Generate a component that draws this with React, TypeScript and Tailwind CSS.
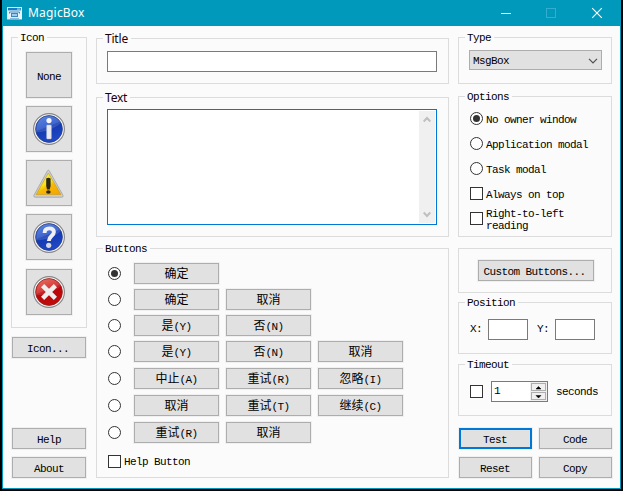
import type { ReactNode } from "react";

const mono =
  "font-['Liberation_Mono','Noto_Sans_CJK_SC',monospace] text-[11px] tracking-[-0.6px] leading-[12px] text-black";
const humanist = "font-['Noto_Sans','Open_Sans',sans-serif]";

function Group({
  label,
  className = "",
  sans = false,
  children,
}: {
  label?: string;
  className?: string;
  sans?: boolean;
  children?: ReactNode;
}) {
  return (
    <section className={`relative shrink-0 border border-[#dcdcdc] ${className}`}>
      {label && (
        <span
          className={`absolute left-[6px] bg-[#fbfbfb] pr-[3px] whitespace-pre ${
            sans
              ? `${humanist} -top-[7px] pl-[2px] text-[12px] leading-[13px] tracking-[-0.2px] text-[#1a0010]`
              : "-top-[6px] pl-[2px]"
          }`}
        >
          {label}
        </span>
      )}
      {children}
    </section>
  );
}

function Btn({
  className = "",
  focused = false,
  children,
}: {
  className?: string;
  focused?: boolean;
  children: ReactNode;
}) {
  return (
    <button
      className={`flex h-[21px] shrink-0 items-center justify-center bg-[#e1e1e1] whitespace-nowrap shadow-[0_0_0_1px_#f0f0f0] ${
        focused ? "border-2 border-[#0078d7]" : "border border-[#adadad]"
      } ${className}`}
    >
      {children}
    </button>
  );
}

function Radio({ checked = false }: { checked?: boolean }) {
  return (
    <span className="flex size-[13px] shrink-0 items-center justify-center rounded-full border border-[#333] bg-white">
      {checked && <span className="size-[7px] rounded-full bg-[#333]" />}
    </span>
  );
}

function Check() {
  return <span className="size-[13px] shrink-0 border border-[#333] bg-white" />;
}

function Field({ className = "" }: { className?: string }) {
  return <div className={`h-[21px] border border-[#7a7a7a] bg-white ${className}`} />;
}

function Orb({ red = false, children }: { red?: boolean; children: ReactNode }) {
  const id = red ? "orb-red" : "orb-blue";
  return (
    <svg width="32" height="32" viewBox="0 0 32 32">
      <defs>
        <linearGradient id={id} x1="0" y1="0" x2="0.4" y2="1">
          <stop offset="0" stopColor={red ? "#e8604e" : "#4a78e0"} />
          <stop offset="0.5" stopColor={red ? "#cf1f1c" : "#2350c8"} />
          <stop offset="0.52" stopColor={red ? "#b80508" : "#1239b0"} />
          <stop offset="1" stopColor={red ? "#c00b0b" : "#1f46c4"} />
        </linearGradient>
      </defs>
      <circle cx="16" cy="16" r="15.4" fill="#f4f4f4" stroke="#858585" strokeWidth="1.1" />
      <circle cx="16" cy="16" r="13.4" fill={`url(#${id})`} stroke={red ? "#8f2020" : "#2b3f80"} strokeWidth="0.8" />
      <path
        d="M3.2 19C8 20 20 17 28 10C25 5 20 3 16 3C8 3 3 9 3.2 19Z"
        fill="#ffffff"
        opacity="0.13"
      />
      {children}
    </svg>
  );
}

const InfoIcon = () => (
  <Orb>
    <circle cx="16" cy="7.6" r="2.6" fill="#f6f6fa" />
    <rect x="13.6" y="12" width="4.8" height="14" rx="0.8" fill="#e9eaf0" stroke="#aab2d0" strokeWidth="0.4" />
  </Orb>
);

const QuestionIcon = () => (
  <Orb>
    <path
      d="M11.6 12C11.6 8.4 13.6 7.4 16.3 7.4C19.1 7.4 20.9 8.7 20.9 11.1C20.9 14.8 16 14.8 15.8 20"
      fill="none"
      stroke="#eeeff5"
      strokeWidth="3.9"
    />
    <circle cx="15.7" cy="24.3" r="2.6" fill="#d5d8e2" />
  </Orb>
);

const ErrorIcon = () => (
  <Orb red>
    <path d="M9.6 9.6L22.4 22.4M22.4 9.6L9.6 22.4" stroke="#eeeeee" strokeWidth="4.5" fill="none" />
  </Orb>
);

const WarningIcon = () => (
  <svg width="32" height="32" viewBox="0 0 32 32">
    <defs>
      <linearGradient id="warn" x1="0.2" y1="0" x2="0.8" y2="1">
        <stop offset="0" stopColor="#f2ee6a" />
        <stop offset="0.45" stopColor="#fce313" />
        <stop offset="0.6" stopColor="#f7b908" />
        <stop offset="1" stopColor="#f5a500" />
      </linearGradient>
    </defs>
    <path
      d="M14.6 3.6L0.8 28.5Q0.5 30.2 2.2 30.2H28.6Q30.8 30.2 30 28.4L16.2 3.6Q15.4 2.7 14.6 3.6Z"
      fill="#cfcfcf"
      stroke="#a0a0a0"
      strokeWidth="0.8"
    />
    <path d="M15.3 6L3.1 27.6H28Z" fill="url(#warn)" stroke="#c5980c" strokeWidth="0.6" />
    <path d="M13.2 11.6Q15.4 10 17.6 11.6V19L16.7 22.6H14.1L13.2 19Z" fill="#29271c" />
    <ellipse cx="15.4" cy="25" rx="2.3" ry="1.8" fill="#29271c" />
  </svg>
);

const rows = [
  ["确定"],
  ["确定", "取消"],
  ["是(Y)", "否(N)"],
  ["是(Y)", "否(N)", "取消"],
  ["中止(A)", "重试(R)", "忽略(I)"],
  ["取消", "重试(T)", "继续(C)"],
  ["重试(R)", "取消"],
];
const rowGap = ["", "mt-[5px]", "mt-[5px]", "mt-[5px]", "mt-[6px]", "mt-[6px]", "mt-[6px]"];

function Caption({ text }: { text: string }) {
  const [name, key] = text.split("(");
  return (
    <>
      <span className="text-[12px] tracking-normal">{name}</span>
      {key && <span>({key}</span>}
    </>
  );
}

function TitleBar() {
  return (
    <header className="flex h-[26px] items-center bg-[#0099bc] text-white">
      <svg className="ml-[4px] shrink-0" width="15" height="13" viewBox="0 0 15 13">
        <rect x="0" y="0" width="15" height="13" fill="#e8f3fb" />
        <rect x="1" y="1" width="13" height="2.4" fill="#1a7cc0" />
        <rect x="10" y="1.6" width="3.4" height="1" fill="#b7dcf2" />
        <path d="M2.5 6.5V5H12.5V6.5" stroke="#3c86bc" fill="none" />
        <rect x="4.5" y="6.5" width="6" height="3" fill="#9fcdee" stroke="#3c86bc" />
        <path d="M3 11.4H12" stroke="#86b6d8" />
        <path d="M0 12.7H15" stroke="#0c6aa8" strokeWidth="0.6" />
      </svg>
      <span className={`${humanist} ml-[6px] text-[12px] leading-[16px] tracking-[0.2px]`}>MagicBox</span>
      <svg className="ml-auto mr-[16px]" width="104" height="12" viewBox="0 0 104 12" fill="none">
        <path d="M1 6.5H11" stroke="#fff" />
        <rect x="46.5" y="1.5" width="9" height="9" stroke="#33add0" />
        <path d="M92.2 1.2L101.8 10.8M101.8 1.2L92.2 10.8" stroke="#fff" strokeWidth="1.1" />
      </svg>
    </header>
  );
}

function Option({ label, children }: { label: ReactNode; children: ReactNode }) {
  return (
    <div className="flex h-[13px] items-center gap-[3px]">
      {children}
      <span className="pt-[2px]">{label}</span>
    </div>
  );
}

export default function App() {
  return (
    <div className="h-[491px] w-[623px] overflow-hidden bg-black pl-[2px]">
      <div className={`h-[489px] w-[619px] border-x border-b border-[#0099bc] bg-[#fbfbfb] ${mono}`}>
        <TitleBar />
        <main className="flex h-[452px] gap-[9px] pr-[8px] pl-[8px]">
          <div className="flex w-[76px] flex-col pt-[11px]">
            <Group label="Icon" className="flex h-[291px] flex-col items-start pt-[14px] pl-[14px]">
              <Btn className="h-[46px] w-[46px] pt-[3px]">None</Btn>
              <Btn className="mt-[8px] h-[46px] w-[46px]"><InfoIcon /></Btn>
              <Btn className="mt-[8px] h-[46px] w-[46px]"><WarningIcon /></Btn>
              <Btn className="mt-[8px] h-[46px] w-[46px]"><QuestionIcon /></Btn>
              <Btn className="mt-[9px] h-[46px] w-[46px]"><ErrorIcon /></Btn>
            </Group>
            <Btn className="mx-px mt-[9px] pt-[2px] pr-[2px]">Icon...</Btn>
            <Btn className="mx-px mt-auto pt-[2px]">Help</Btn>
            <Btn className="mx-px mt-[8px] pt-[2px]">About</Btn>
          </div>

          <div className="flex w-[353px] flex-col pt-[12px]">
            <Group label="Title" sans className="h-[46px] pt-[12px] pl-[10px]">
              <Field className="w-[330px]" />
            </Group>
            <Group label="Text" sans className="mt-[13px] h-[140px] pt-[11px] pl-[10px]">
              <div className="flex h-[116px] w-[330px] justify-end border border-[#0078d7] bg-white p-px">
                <div className="flex w-[16px] flex-col items-center justify-between bg-[#f0f0f0] py-[5px]">
                  <svg width="8" height="7" viewBox="0 0 8 7">
                    <path d="M0.7 5.5L4 2L7.3 5.5" fill="none" stroke="#bfbfbf" strokeWidth="2" />
                  </svg>
                  <svg width="8" height="7" viewBox="0 0 8 7">
                    <path d="M0.7 1.5L4 5L7.3 1.5" fill="none" stroke="#bfbfbf" strokeWidth="2" />
                  </svg>
                </div>
              </div>
            </Group>
            <Group label="Buttons" className="mt-[11px] h-[230px] pt-[14px] pl-[11px]">
              {rows.map((row, i) => (
                <div key={i} className={`flex h-[21px] items-center ${rowGap[i]}`}>
                  <Radio checked={i === 0} />
                  <div className="ml-[13px] flex gap-[7px]">
                    {row.map((text, j) => (
                      <Btn key={j} className="w-[85px] pt-[2px]">
                        <Caption text={text} />
                      </Btn>
                    ))}
                  </div>
                </div>
              ))}
              <div className="mt-[11px] flex items-center gap-[3px]">
                <Check />
                <span className="pt-[2px]">Help Button</span>
              </div>
            </Group>
          </div>

          <div className="flex w-[154px] flex-col pt-[11px]">
            <Group label="Type" className="h-[47px] pt-[12px] pl-[10px]">
              <div className="flex h-[20px] w-[133px] items-center justify-between border border-[#adadad] bg-[#e1e1e1] px-[3px]">
                <span className="pt-[2px]">MsgBox</span>
                <svg width="10" height="6" viewBox="0 0 10 6" className="mt-[2px]">
                  <path d="M1 0.8L5 4.8L9 0.8" fill="none" stroke="#505050" strokeWidth="1.2" />
                </svg>
              </div>
            </Group>
            <Group label="Options" className="mt-[12px] flex h-[141px] flex-col gap-[12px] pt-[15px] pl-[11px]">
              <Option label="No owner window"><Radio checked /></Option>
              <Option label="Application modal"><Radio /></Option>
              <Option label="Task modal"><Radio /></Option>
              <Option label="Always on top"><Check /></Option>
              <Option label={<>Right-to-left<br />reading</>}><Check /></Option>
            </Group>
            <Group className="mt-[11px] h-[45px] pt-[11px] pl-[19px]">
              <Btn className="w-[116px] pt-[2px] pr-[3px]">Custom Buttons...</Btn>
            </Group>
            <Group label="Position" className="mt-[9px] flex h-[52px] items-start pt-[16px] pl-[11px]">
              <span className="w-[18px] pt-[4px]">X:</span>
              <Field className="w-[40px]" />
              <span className="ml-[9px] w-[18px] pt-[4px]">Y:</span>
              <Field className="w-[40px]" />
            </Group>
            <Group label="Timeout" className="mt-[10px] flex h-[52px] items-start pt-[16px] pl-[11px]">
              <div className="flex h-[21px] items-center">
                <Check />
                <div className="ml-[8px] flex h-[21px] w-[57px] items-stretch justify-between border border-[#7a7a7a] bg-white pl-[2px]">
                  <span className="pt-[3px]">1</span>
                  <span className="flex w-[17px] flex-col gap-px bg-[#f0f0f0] p-px">
                    {["M2 4H7L4.5 1.5Z", "M2 1.5H7L4.5 4Z"].map((d) => (
                      <span key={d} className="flex h-[8px] items-center justify-center border border-[#adadad] bg-[#f0f0f0]">
                        <svg width="9" height="5" viewBox="0 0 9 5"><path d={d} fill="#000" stroke="#000" strokeWidth="0.5" /></svg>
                      </span>
                    ))}
                  </span>
                </div>
                <span className="ml-[8px]">seconds</span>
              </div>
            </Group>
            <div className="mt-[12px] ml-px grid grid-cols-[73px_73px] gap-x-[7px] gap-y-[8px]">
              <Btn focused className="pt-[2px] pr-px">Test</Btn>
              <Btn className="pt-[2px] pr-px">Code</Btn>
              <Btn className="pt-[2px] pr-px">Reset</Btn>
              <Btn className="pt-[2px] pr-px">Copy</Btn>
            </div>
          </div>
        </main>
      </div>
    </div>
  );
}
